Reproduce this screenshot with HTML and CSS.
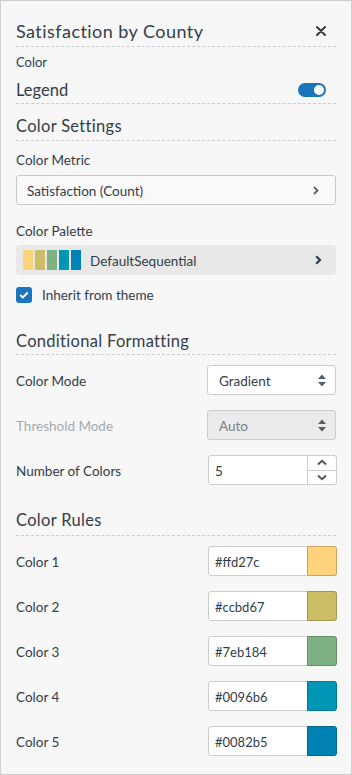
FILE: index.html
```html
<!DOCTYPE html>
<html lang="en">
<head>
    <meta charset="UTF-8">
    <meta name="viewport" content="width=device-width, initial-scale=1.0">
    <title>Satisfaction by County</title>
    <link rel="stylesheet" href="styles.css">
</head>
<body>
    <div class="panel">
        <div class="panel-header">
            <h1>Satisfaction by County</h1>
            <button class="close-btn" aria-label="Close">
                <svg width="10" height="10" viewBox="0 0 10 10"><path d="M1 1L9 9M9 1L1 9" stroke="#333b44" stroke-width="2" stroke-linecap="round"/></svg>
            </button>
        </div>

        <div class="group-label">Color</div>
        <div class="legend-row">
            <span>Legend</span>
            <span class="toggle"><span class="knob"></span></span>
        </div>

        <h2 class="section-title first">Color Settings</h2>

        <div class="field-label">Color Metric</div>
        <div class="picker">
            <span>Satisfaction (Count)</span>
            <svg width="6" height="9" viewBox="0 0 6 9"><path d="M1 1L4.5 4.5L1 8" fill="none" stroke="#5b636b" stroke-width="1.8"/></svg>
        </div>

        <div class="field-label palette-label">Color Palette</div>
        <div class="palette">
            <span class="swatches">
                <i style="background:#ffd27c"></i><i style="background:#ccbd67"></i><i style="background:#7eb184"></i><i style="background:#0096b6"></i><i style="background:#0082b5"></i>
            </span>
            <span class="palette-name">DefaultSequential</span>
            <svg width="7" height="10" viewBox="0 0 7 10"><path d="M1.2 1.2L5 5L1.2 8.8" fill="none" stroke="#2c3e50" stroke-width="2.2"/></svg>
        </div>

        <label class="check-row">
            <span class="checkbox">
                <svg width="10" height="8" viewBox="0 0 10 8"><path d="M1.2 4L3.8 6.5L8.8 1.5" fill="none" stroke="#fff" stroke-width="1.8"/></svg>
            </span>
            Inherit from theme
        </label>

        <h2 class="section-title">Conditional Formatting</h2>

        <div class="rows">
            <div class="row">
                <span class="row-label">Color Mode</span>
                <div class="select">
                    <span>Gradient</span>
                    <svg width="8" height="13" viewBox="0 0 8 13"><path d="M4 0.5L8 5H0Z M4 12.5L8 8H0Z" fill="#555d66"/></svg>
                </div>
            </div>
            <div class="row disabled">
                <span class="row-label">Threshold Mode</span>
                <div class="select">
                    <span>Auto</span>
                    <svg width="8" height="13" viewBox="0 0 8 13"><path d="M4 0.5L8 5H0Z M4 12.5L8 8H0Z" fill="#555d66"/></svg>
                </div>
            </div>
            <div class="row">
                <span class="row-label">Number of Colors</span>
                <div class="number">
                    <span class="number-value">5</span>
                    <span class="spinner">
                        <span><svg width="10" height="7" viewBox="0 0 10 7"><path d="M1 5.5L5 1.8L9 5.5" fill="none" stroke="#4d5660" stroke-width="1.9"/></svg></span>
                        <span><svg width="10" height="7" viewBox="0 0 10 7"><path d="M1 1.5L5 5.2L9 1.5" fill="none" stroke="#4d5660" stroke-width="1.9"/></svg></span>
                    </span>
                </div>
            </div>
        </div>

        <h2 class="section-title rules-title">Color Rules</h2>

        <div class="rows">
            <div class="row">
                <span class="row-label">Color 1</span>
                <div class="color-input"><span class="hex">#ffd27c</span><span class="chip" style="background:#ffd27c;border-color:#c9a45c"></span></div>
            </div>
            <div class="row">
                <span class="row-label">Color 2</span>
                <div class="color-input"><span class="hex">#ccbd67</span><span class="chip" style="background:#ccbd67;border-color:#a39750"></span></div>
            </div>
            <div class="row">
                <span class="row-label">Color 3</span>
                <div class="color-input"><span class="hex">#7eb184</span><span class="chip" style="background:#7eb184;border-color:#648d69"></span></div>
            </div>
            <div class="row">
                <span class="row-label">Color 4</span>
                <div class="color-input"><span class="hex">#0096b6</span><span class="chip" style="background:#0096b6;border-color:#007891"></span></div>
            </div>
            <div class="row">
                <span class="row-label">Color 5</span>
                <div class="color-input"><span class="hex">#0082b5</span><span class="chip" style="background:#0082b5;border-color:#006891"></span></div>
            </div>
        </div>
    </div>
</body>
</html>
```

FILE: styles.css
```css
* {
    box-sizing: border-box;
}
body {
    margin: 0;
    font-family: Lato, "Liberation Sans", sans-serif;
    color: #333e49;
    background: #f7f7f7;
}
.panel {
    width: 352px;
    height: 775px;
    border: 1px solid #cfcfcf;
    padding: 0 15px;
    background: #f7f7f7;
}
.panel-header {
    display: flex;
    justify-content: space-between;
    align-items: center;
    height: 46px;
    padding-top: 15px;
    border-bottom: 1px dashed #cccccc;
}
.panel-header h1 {
    margin: 0;
    font-size: 18px;
    font-weight: 400;
    letter-spacing: 0.45px;
    line-height: 26px;
}
.close-btn {
    border: none;
    background: none;
    padding: 0;
    margin-right: 10px;
    display: flex;
}
.group-label {
    font-size: 13px;
    line-height: 28px;
    padding-top: 1px;
}
.legend-row {
    display: flex;
    justify-content: space-between;
    align-items: center;
    height: 28px;
    font-size: 16.5px;
    border-bottom: 1px dashed #cccccc;
    padding-top: 1px;
}
.toggle {
    width: 28px;
    height: 14px;
    border-radius: 7px;
    background: #1a75bb;
    margin-right: 10px;
    display: flex;
    justify-content: flex-end;
    align-items: center;
    padding-right: 2px;
}
.knob {
    width: 10px;
    height: 10px;
    border-radius: 50%;
    background: #fff;
}
.section-title {
    margin: 25px 0 0;
    font-size: 16.5px;
    font-weight: 400;
    letter-spacing: 0.3px;
    line-height: 26px;
    border-bottom: 1px dashed #cccccc;
}
.section-title.first {
    margin-top: 9px;
    padding-bottom: 1px;
}
.section-title.rules-title {
    margin-top: 22px;
    padding-bottom: 2px;
}
.field-label {
    font-size: 13.5px;
    line-height: 20px;
    margin-top: 8px;
    margin-bottom: 6px;
    padding-top: 1px;
}
.palette-label {
    margin-top: 15px;
    margin-bottom: 5px;
}
.picker {
    display: flex;
    justify-content: space-between;
    align-items: center;
    height: 30px;
    padding: 0 16px 0 10px;
    margin-top: -1px;
    background: #f9f9f9;
    border: 1px solid #c8c8c8;
    border-radius: 3px;
    font-size: 13.5px;
}
.palette {
    display: flex;
    align-items: center;
    height: 30px;
    padding: 0 14px 0 7px;
    margin-top: -1px;
    background: #e8e8e8;
    border-radius: 3px;
    font-size: 13.5px;
}
.picker > span,
.palette-name {
    padding-top: 1px;
}
.swatches {
    display: flex;
    gap: 2px;
}
.swatches i {
    display: block;
    width: 10px;
    height: 20px;
}
.palette-name {
    flex: 1;
    margin-left: 9px;
}
.check-row {
    display: flex;
    align-items: center;
    gap: 10px;
    margin-top: 12px;
    height: 16px;
    font-size: 13.5px;
}
.checkbox {
    width: 16px;
    height: 16px;
    border-radius: 3px;
    background: #1a75bb;
    display: flex;
    justify-content: center;
    align-items: center;
}
.rows {
    display: flex;
    flex-direction: column;
    gap: 15px;
    margin-top: 10px;
}
.row {
    display: flex;
    justify-content: space-between;
    align-items: center;
    height: 30px;
    font-size: 13.5px;
}
.row-label {
    padding-top: 2px;
}
.row.disabled .row-label {
    color: #a3abb3;
}
.select {
    width: 129px;
    height: 30px;
    display: flex;
    justify-content: space-between;
    align-items: center;
    padding: 0 9px 0 11px;
    background: #fff;
    border: 1px solid #cccccc;
    border-radius: 3px;
    font-size: 13.5px;
}
.select > span {
    padding-top: 2px;
}
.disabled .select {
    background: #ebebeb;
    color: #777f87;
}
.number,
.color-input {
    width: 129px;
    height: 30px;
    display: flex;
    align-items: stretch;
    background: #fff;
    border: 1px solid #cccccc;
    border-radius: 3px;
    font-size: 13px;
    margin-right: -1px;
}
.number-value,
.hex {
    flex: 1;
    display: flex;
    align-items: center;
    padding: 1px 0 0 6px;
}
.number-value {
    font-size: 13.5px;
}
.spinner {
    width: 29px;
    display: flex;
    flex-direction: column;
    border-left: 1px solid #cccccc;
}
.spinner span {
    flex: 1;
    display: flex;
    justify-content: center;
    align-items: center;
}
.spinner span + span {
    border-top: 1px solid #cccccc;
}
.chip {
    width: 30px;
    margin: -1px -1px -1px 0;
    border: 1px solid;
    border-radius: 0 3px 3px 0;
}
```
